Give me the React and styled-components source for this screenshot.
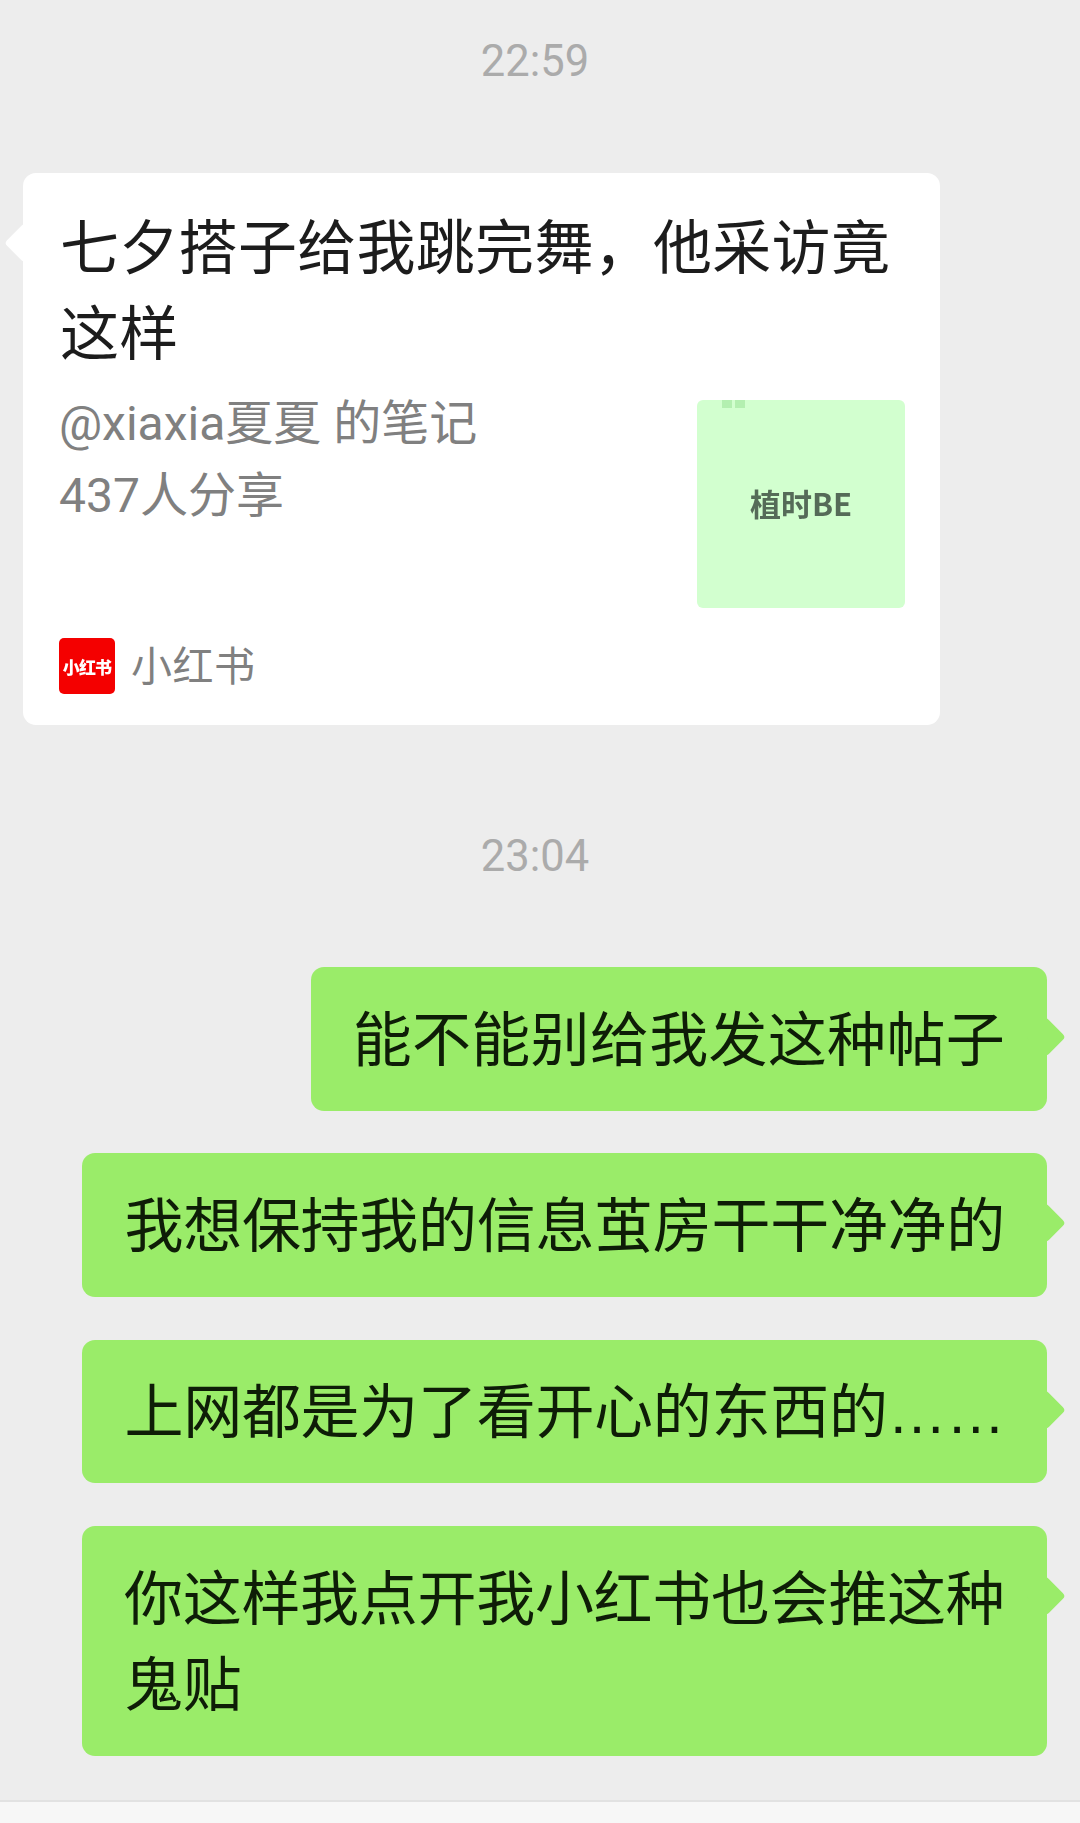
import React from "react";
import styled, { createGlobalStyle } from "styled-components";

const Global = createGlobalStyle`
  html, body { margin: 0; padding: 0; background: #ededed; }
  * { box-sizing: border-box; }
  body { font-family: "Noto Sans CJK SC", "Noto Sans", sans-serif; }
`;

const Page = styled.div`
  width: 1080px;
  height: 1823px;
  background: #ededed;
  display: flex;
  flex-direction: column;
  overflow: hidden;
`;

const Thread = styled.main`
  flex: 1;
  padding: 32px 33px 0 23px;
  display: flex;
  flex-direction: column;
`;

const Time = styled.div`
  height: 60px;
  line-height: 60px;
  margin-top: ${(p) => p.$top || 0}px;
  text-align: center;
  color: #ababab;
  font-family: Roboto, sans-serif;
  font-size: 43.5px;
`;

const Bubble = styled.div`
  position: relative;
  border-radius: 13px;
  &::before {
    content: "";
    position: absolute;
    top: 56px;
    width: 28px;
    height: 28px;
    border-radius: 4px;
    transform: rotate(45deg);
    background: inherit;
  }
`;

const Card = styled(Bubble)`
  width: 917px;
  height: 552px;
  margin-top: 81px;
  padding: 28px 35px 31px 37px;
  background: #fff;
  display: flex;
  flex-direction: column;
  &::before {
    left: -13px;
  }
`;

const CardTitle = styled.div`
  font-size: 59px;
  line-height: 86px;
  letter-spacing: 0.3px;
  color: #1c1c1c;
`;

const CardBody = styled.div`
  flex: 1;
  display: flex;
  justify-content: space-between;
  align-items: flex-start;
  margin-top: 27px;
`;

const Meta = styled.div`
  font-family: Roboto, "Noto Sans CJK SC", sans-serif;
  font-size: 48px;
  line-height: 72px;
  color: #808080;
  margin-top: -12px;
  margin-left: -1px;
`;

const MetaLine = styled.div`
  white-space: pre;
`;

const Thumb = styled.div`
  position: relative;
  width: 208px;
  height: 208px;
  border-radius: 6px;
  background: #d2ffcf;
  display: flex;
  align-items: center;
  justify-content: center;
`;

const ThumbDots = styled.div`
  position: absolute;
  top: 0;
  left: 25px;
  display: flex;
  gap: 3px;
`;

const ThumbDot = styled.span`
  width: 10px;
  height: 8px;
  background: #b3efb0;
`;

const ThumbText = styled.div`
  font-size: 31px;
  font-weight: 700;
  color: #556b58;
  filter: blur(0.6px);
  margin-top: -4px;
`;

const Source = styled.div`
  display: flex;
  align-items: center;
  gap: 16px;
  margin-left: -1px;
`;

const SourceLogo = styled.div`
  width: 56px;
  height: 56px;
  border-radius: 5px;
  background: #f40000;
  color: #fff;
  font-size: 17px;
  font-weight: 900;
  letter-spacing: -0.8px;
  display: flex;
  align-items: center;
  justify-content: center;
  white-space: nowrap;
  filter: blur(0.3px);
`;

const SourceName = styled.div`
  font-size: 41px;
  line-height: 56px;
  margin-top: -6px;
  color: #808080;
  letter-spacing: 0.5px;
`;

const Outgoing = styled(Bubble)`
  align-self: flex-end;
  max-width: 965px;
  margin-top: ${(p) => p.$top}px;
  padding: 25.5px 42px 32px;
  background: #9aec69;
  color: #0e1d07;
  font-size: 59px;
  line-height: 86px;
  letter-spacing: ${(p) => p.$tracking}px;
  &::before {
    right: -13px;
  }
`;

const Dots = styled.span`
  font-family: "Liberation Sans", sans-serif;
  line-height: 1;
`;

const BottomBar = styled.footer`
  height: 23px;
  background: #f7f7f7;
  border-top: 2px solid #e2e2e2;
`;

export default function App() {
  return (
    <Page>
      <Global />
      <Thread>
        <Time>22:59</Time>
        <Card>
          <CardTitle>七夕搭子给我跳完舞，他采访竟这样</CardTitle>
          <CardBody>
            <Meta>
              <MetaLine>@xiaxia夏夏 的笔记</MetaLine>
              <MetaLine>437人分享</MetaLine>
            </Meta>
            <Thumb>
              <ThumbDots>
                <ThumbDot />
                <ThumbDot />
              </ThumbDots>
              <ThumbText>植时BE</ThumbText>
            </Thumb>
          </CardBody>
          <Source>
            <SourceLogo>小红书</SourceLogo>
            <SourceName>小红书</SourceName>
          </Source>
        </Card>
        <Time $top={102}>23:04</Time>
        <Outgoing $top={80} $tracking={0.3}>能不能别给我发这种帖子</Outgoing>
        <Outgoing $top={42.5} $tracking={-0.3}>我想保持我的信息茧房干干净净的</Outgoing>
        <Outgoing $top={43} $tracking={-0.3}>上网都是为了看开心的东西的<Dots>……</Dots></Outgoing>
        <Outgoing $top={43} $tracking={-0.3}>你这样我点开我小红书也会推这种鬼贴</Outgoing>
      </Thread>
      <BottomBar />
    </Page>
  );
}
